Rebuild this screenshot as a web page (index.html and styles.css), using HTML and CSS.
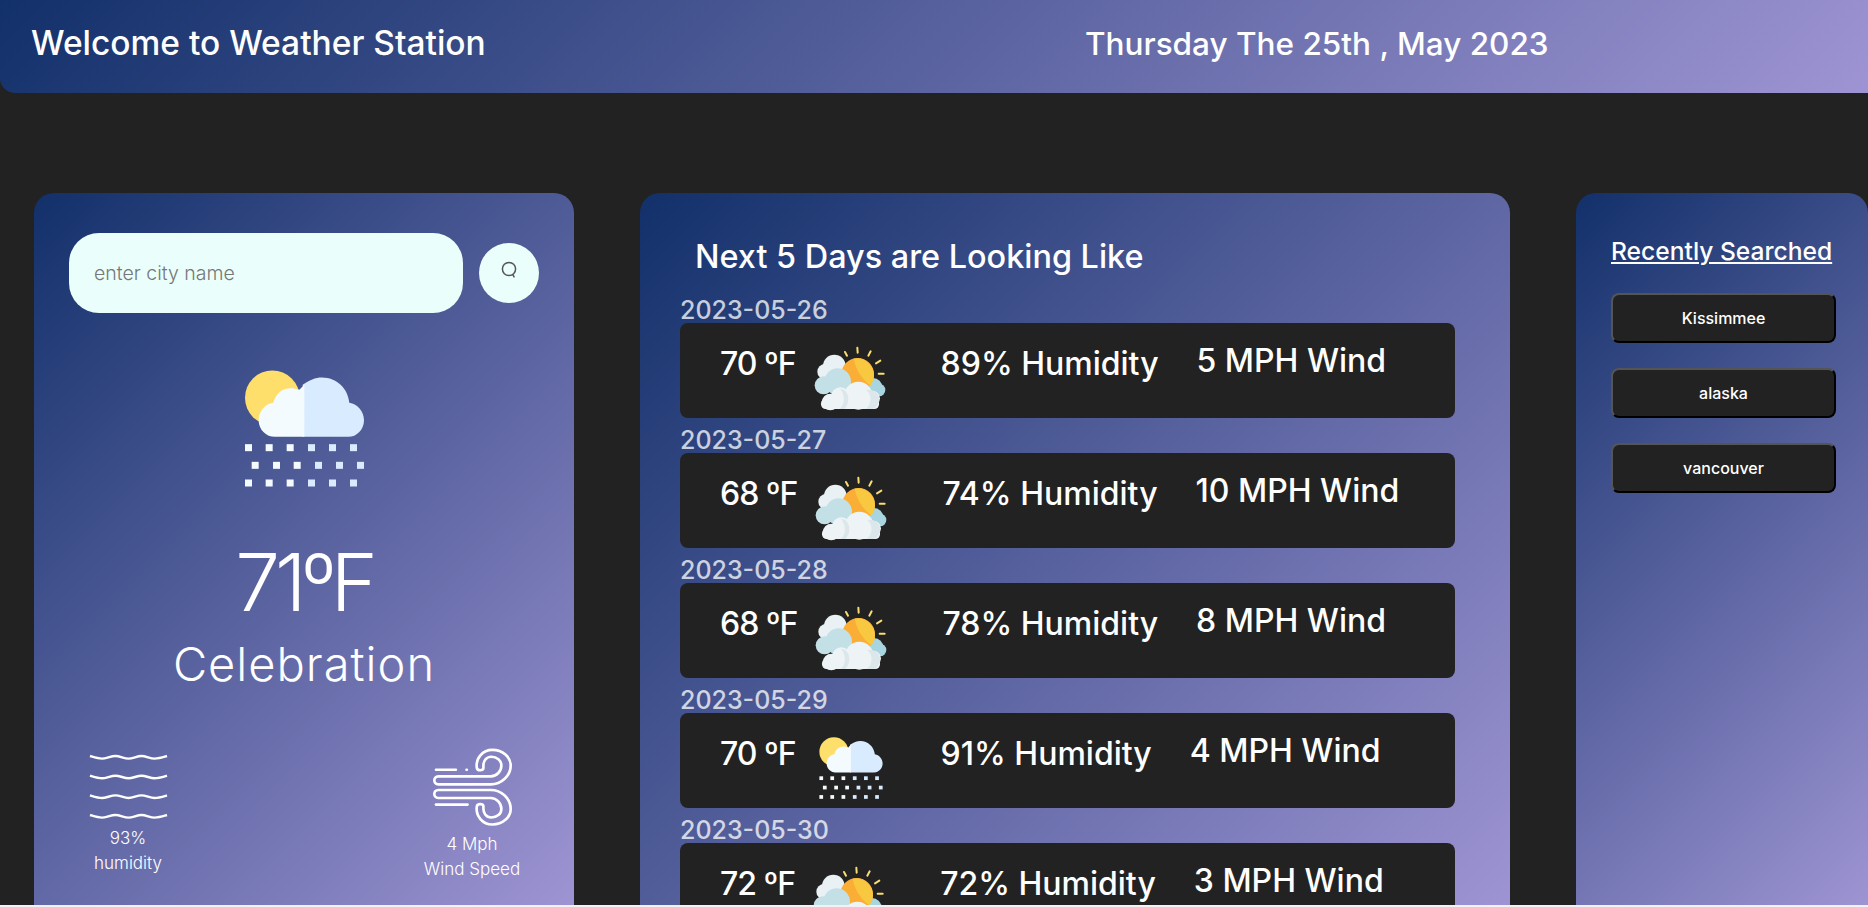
FILE: index.html
```html
<!DOCTYPE html>
<html lang="en">
<head>
    <meta charset="UTF-8">
    <meta name="viewport" content="width=device-width, initial-scale=1.0">
    <title>Weather Station</title>
    <link rel="stylesheet" href="styles.css">
</head>
<body>
    <svg class="sprite" aria-hidden="true">
        <symbol id="rain-icon" viewBox="75 60 357 350">
            <circle cx="157" cy="143" r="82" fill="#ffdf6b"/>
            <path fill="#d8ebff" d="M248 104C268 90 286 82 306 82C350 82 384 115 388 158C413 162 432 184 432 210C432 238 410 260 385 260H248Z"/>
            <path fill="#f4fbff" d="M253 260H165C138 260 116 238 116 210C116 183 136 161 160 158C166 132 186 114 212 114C222 114 231 116 238 119C243 115 248 108 253 104Z"/>
            <g fill="#f4fbff">
                <rect x="75" y="282" width="21" height="21"/><rect x="137" y="282" width="21" height="21"/><rect x="200" y="282" width="21" height="21"/>
                <rect x="95" y="335" width="21" height="21"/><rect x="159" y="335" width="21" height="21"/><rect x="221" y="335" width="21" height="21"/>
                <rect x="75" y="388" width="21" height="21"/><rect x="137" y="388" width="21" height="21"/><rect x="200" y="388" width="21" height="21"/>
            </g>
            <g fill="#d8ebff">
                <rect x="264" y="282" width="21" height="21"/><rect x="327" y="282" width="21" height="21"/><rect x="390" y="282" width="21" height="21"/>
                <rect x="285" y="335" width="21" height="21"/><rect x="348" y="335" width="21" height="21"/><rect x="411" y="335" width="21" height="21"/>
                <rect x="264" y="388" width="21" height="21"/><rect x="327" y="388" width="21" height="21"/><rect x="390" y="388" width="21" height="21"/>
            </g>
        </symbol>

        <symbol id="sun-cloud-icon" viewBox="0 0 255 225">
            <g stroke="#f8dd72" stroke-width="6" stroke-linecap="round">
                <path d="M108 36L114 47M145 23L146 38M185 34L178 47M214 62L201 70M224 101H209"/>
            </g>
            <g fill="#e9f1f4">
                <circle cx="76" cy="78" r="34"/><circle cx="48" cy="95" r="23"/>
            </g>
            <g fill="#a8d5df">
                <circle cx="192" cy="142" r="28"/><circle cx="210" cy="150" r="19"/>
            </g>
            <circle cx="146" cy="103" r="49" fill="#fbae35"/>
            <path fill="#f7c840" d="M134 56C160 48 195 72 195 106C195 118 191 128 184 136C172 128 142 100 134 56Z"/>
            <g fill="#c3e0e7">
                <circle cx="86" cy="125" r="40"/><circle cx="44" cy="136" r="27"/><circle cx="108" cy="150" r="26"/>
            </g>
            <g fill="#eef3f6">
                <circle cx="64" cy="186" r="25"/><circle cx="94" cy="170" r="28"/><circle cx="148" cy="167" r="42"/><circle cx="190" cy="175" r="23"/>
                <rect x="36" y="176" width="174" height="31" rx="14"/>
            </g>
            <path fill="#dce7eb" d="M92 146C108 146 118 160 118 176C118 190 112 200 106 207H92C102 198 106 186 104 172C102 160 98 150 92 146Z"/>
            <path fill="#dce7eb" d="M172 150C190 146 212 158 210 180C208 196 198 207 190 207H170C186 196 192 166 172 150Z"/>
        </symbol>
    </svg>

    <div class="page">
        <header class="header">
            <div class="header-title">Welcome to Weather Station</div>
            <div class="header-date">Thursday The 25th , May 2023</div>
        </header>

        <main class="main">
            <section class="panel current">
                <form class="search">
                    <input class="search-input" type="text" placeholder="enter city name">
                    <button class="search-btn" type="button" aria-label="search">
                        <svg class="search-icon" viewBox="0 0 20 20">
                            <circle cx="10" cy="9" r="6.6"/>
                            <path d="M13.6 14.4L15.4 17.4"/>
                        </svg>
                    </button>
                </form>

                <svg class="current-icon"><use href="#rain-icon"/></svg>
                <div class="current-temp">71ºF</div>
                <div class="current-city">Celebration</div>

                <div class="stats">
                    <div class="stat">
                        <svg class="wave-icon" viewBox="0 0 79 65">
                            <path d="M1 2C5 3.2 9 4.6 13 4.6S22 2 26.5 2 35 4.6 39.5 4.6 48 2 52.5 2 61 4.6 65.5 4.6 74 3.2 78 2"/>
                            <path d="M1 21.7C5 22.9 9 24.3 13 24.3S22 21.7 26.5 21.7 35 24.3 39.5 24.3 48 21.7 52.5 21.7 61 24.3 65.5 24.3 74 22.9 78 21.7"/>
                            <path d="M1 41.4C5 42.6 9 44 13 44S22 41.4 26.5 41.4 35 44 39.5 44 48 41.4 52.5 41.4 61 44 65.5 44 74 42.6 78 41.4"/>
                            <path d="M1 61C5 62.2 9 63.6 13 63.6S22 61 26.5 61 35 63.6 39.5 63.6 48 61 52.5 61 61 63.6 65.5 63.6 74 62.2 78 61"/>
                        </svg>
                        <div>93%</div>
                        <div>humidity</div>
                    </div>
                    <div class="stat">
                        <svg class="wind-icon" viewBox="60 50 250 240">
                            <path d="M75 118H135M167 118H168"/>
                            <path d="M82 138H240C258 138 272 122 272 105C272 90 258 79 242 79C226 79 216 92 218 112C218 122 199 122 198 112C194 84 215 58 245 58C276 58 300 80 300 105C300 136 272 162 240 162H82C66 162 66 138 82 138Z"/>
                            <path d="M75 223H170"/>
                            <path d="M82 203H240C258 203 272 219 272 236C272 251 258 262 242 262C226 262 216 249 218 229C218 219 199 219 198 229C194 257 215 283 245 283C276 283 300 261 300 236C300 205 272 179 240 179H82C66 179 66 203 82 203Z"/>
                        </svg>
                        <div>4 Mph</div>
                        <div>Wind Speed</div>
                    </div>
                </div>
            </section>

            <section class="panel forecast">
                <h2 class="forecast-title">Next 5 Days are Looking Like</h2>

                <div class="day-date">2023-05-26</div>
                <div class="day-row">
                    <span class="day-temp">70 ºF</span>
                    <span class="day-icon"><svg class="icon-sun"><use href="#sun-cloud-icon"/></svg></span>
                    <span class="day-hum">89% Humidity</span>
                    <span class="day-wind">5 MPH Wind</span>
                </div>

                <div class="day-date">2023-05-27</div>
                <div class="day-row">
                    <span class="day-temp">68 ºF</span>
                    <span class="day-icon"><svg class="icon-sun"><use href="#sun-cloud-icon"/></svg></span>
                    <span class="day-hum">74% Humidity</span>
                    <span class="day-wind">10 MPH Wind</span>
                </div>

                <div class="day-date">2023-05-28</div>
                <div class="day-row">
                    <span class="day-temp">68 ºF</span>
                    <span class="day-icon"><svg class="icon-sun"><use href="#sun-cloud-icon"/></svg></span>
                    <span class="day-hum">78% Humidity</span>
                    <span class="day-wind">8 MPH Wind</span>
                </div>

                <div class="day-date">2023-05-29</div>
                <div class="day-row">
                    <span class="day-temp">70 ºF</span>
                    <span class="day-icon"><svg class="icon-rain"><use href="#rain-icon"/></svg></span>
                    <span class="day-hum">91% Humidity</span>
                    <span class="day-wind">4 MPH Wind</span>
                </div>

                <div class="day-date">2023-05-30</div>
                <div class="day-row">
                    <span class="day-temp">72 ºF</span>
                    <span class="day-icon"><svg class="icon-sun"><use href="#sun-cloud-icon"/></svg></span>
                    <span class="day-hum">72% Humidity</span>
                    <span class="day-wind">3 MPH Wind</span>
                </div>
            </section>

            <section class="panel recent">
                <h3 class="recent-title">Recently Searched</h3>
                <button class="recent-btn" type="button">Kissimmee</button>
                <button class="recent-btn" type="button">alaska</button>
                <button class="recent-btn" type="button">vancouver</button>
            </section>
        </main>
    </div>
</body>
</html>
```

FILE: styles.css
```css
html, body {
    margin: 0;
    padding: 0;
    height: 907px;
    overflow: hidden;
    background-color: #f2f2f2;
}

body {
    font-family: "Inter", "Open Sans", sans-serif;
    color: #fff;
}

.sprite {
    width: 0;
    height: 0;
    overflow: hidden;
    display: block;
}

.page {
    height: 905px;
    overflow: hidden;
    background-color: #222;
}

.header {
    height: 93px;
    box-sizing: border-box;
    display: grid;
    grid-template-columns: 1054px 1fr;
    align-items: center;
    padding: 0 0 7px 31px;
    background: linear-gradient(135deg, #12306a, #9e94d3);
    border-bottom-left-radius: 15px;
    font-weight: 500;
}

.header-title {
    font-size: 33.5px;
}

.header-date {
    font-size: 31.5px;
}

.main {
    display: flex;
    gap: 66px;
    margin-top: 100px;
    padding-left: 34px;
}

.panel {
    height: 712px;
    box-sizing: border-box;
    flex: none;
    background: linear-gradient(135deg, #12306a, #9e94d3);
    border-radius: 20px 20px 0 0;
}

/* left panel */
.current {
    width: 540px;
    padding: 40px 35px 0;
    text-align: center;
}

.search {
    display: flex;
    align-items: center;
    gap: 16px;
}

.search-input {
    width: 394px;
    height: 80px;
    box-sizing: border-box;
    padding: 0 25px;
    border: none;
    border-radius: 30px;
    background-color: #eafffb;
    font-family: inherit;
    font-size: 19.5px;
    font-weight: 300;
    outline: none;
}

.search-input::placeholder {
    color: #777;
}

.search-btn {
    width: 60px;
    height: 60px;
    padding: 0 0 4px;
    border: none;
    border-radius: 50%;
    background-color: #eafffb;
}

.search-icon {
    width: 20px;
    height: 20px;
    fill: none;
    stroke: #555;
    stroke-width: 1.5;
}

.current-icon {
    display: block;
    width: 119px;
    height: 117px;
    margin: 57px auto 0;
}

.current-temp {
    margin-top: 45px;
    font-size: 80px;
    line-height: 100px;
    font-weight: 300;
    letter-spacing: -5px;
}

.current-city {
    margin-top: -1px;
    font-size: 47px;
    line-height: 66px;
    font-weight: 300;
    letter-spacing: 1px;
}

.stats {
    display: flex;
    justify-content: space-between;
    margin: 50px 0 0;
    padding: 0 17px 0 9px;
    font-size: 17px;
    font-weight: 300;
    line-height: 25px;
}

.stat {
    width: 100px;
    white-space: nowrap;
}

.wave-icon {
    display: block;
    width: 79px;
    height: 65px;
    margin: 7px auto 7px;
    fill: none;
    stroke: #fff;
    stroke-width: 2.4;
}

.wind-icon {
    display: block;
    width: 83px;
    height: 80px;
    margin: 0 auto 5px;
    fill: none;
    stroke: #fff;
    stroke-width: 8;
    stroke-linecap: round;
}

/* middle panel */
.forecast {
    width: 870px;
    padding: 40px 40px 0;
}

.forecast-title {
    margin: 0 0 7px 15px;
    font-size: 32.4px;
    font-weight: 500;
    line-height: 48px;
}

.day-date {
    height: 35px;
    font-size: 25px;
    line-height: 45px;
    font-weight: 500;
    color: rgba(255, 255, 255, 0.75);
}

.day-row {
    width: 775px;
    height: 95px;
    display: flex;
    align-items: flex-start;
    box-sizing: border-box;
    padding: 19px 0 0 40px;
    background-color: #222;
    border-radius: 8px;
    font-size: 32px;
    font-weight: 500;
    line-height: 44px;
}

.day-temp {
    letter-spacing: -1px;
}

.day-icon {
    width: 85px;
    height: 75px;
    margin: -2px 47px 0 13px;
    display: flex;
    justify-content: center;
}

.icon-sun {
    width: 85px;
    height: 75px;
}

.icon-rain {
    width: 64px;
    height: 62px;
    margin-top: 7px;
}

.day-wind {
    margin: -3px 0 0 38px;
}

/* right panel */
.recent {
    width: 292px;
    padding: 40px 35px 0;
}

.recent-title {
    margin: 0 0 24px;
    font-size: 24.6px;
    font-weight: 500;
    line-height: 36px;
    text-decoration: underline;
}

.recent-btn {
    display: block;
    width: 225px;
    height: 50px;
    margin-bottom: 25px;
    background-color: #222;
    border: 2px outset #555;
    border-color: #555 #000 #000 #555;
    border-radius: 8px;
    color: #fff;
    font-family: inherit;
    font-size: 16px;
    font-weight: 500;
}
```
